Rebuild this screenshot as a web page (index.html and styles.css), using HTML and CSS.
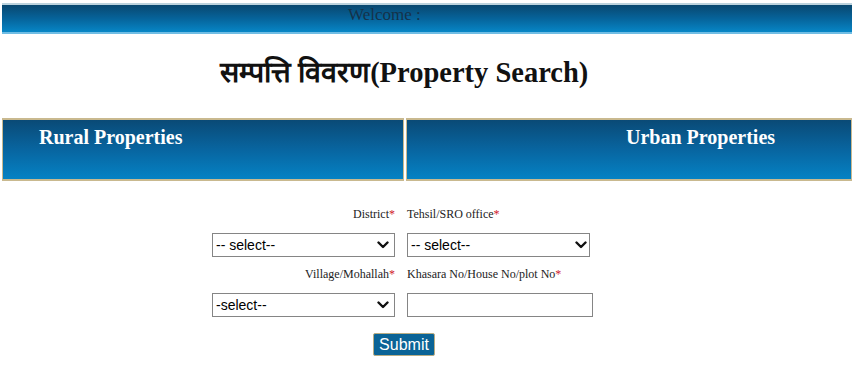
FILE: index.html
```html
<!DOCTYPE html>
<html>
<head>
<meta charset="utf-8">
<link rel="stylesheet" href="styles.css">
</head>
<body>
<div class="page">
  <div class="topbar"><span class="welcome">Welcome :</span></div>
  <h1 class="title">सम्पत्ति विवरण(Property Search)</h1>
  <div class="tabs">
    <div class="tab tab-rural">Rural Properties</div>
    <div class="tab tab-urban">Urban Properties</div>
  </div>
  <form class="form">
    <label class="lbl lbl-left">District<span class="req">*</span></label>
    <label class="lbl lbl-right">Tehsil/SRO office<span class="req">*</span></label>
    <div class="sel-wrap">
      <select class="ctl"><option>-- select--</option></select>
      <svg class="chev" viewBox="0 0 12 8" width="12" height="8"><path d="M1.5 1.5 L6 6 L10.5 1.5" fill="none" stroke="#111" stroke-width="2.4" stroke-linecap="round" stroke-linejoin="round"/></svg>
    </div>
    <div class="sel-wrap">
      <select class="ctl"><option>-- select--</option></select>
      <svg class="chev" viewBox="0 0 12 8" width="12" height="8"><path d="M1.5 1.5 L6 6 L10.5 1.5" fill="none" stroke="#111" stroke-width="2.4" stroke-linecap="round" stroke-linejoin="round"/></svg>
    </div>
    <label class="lbl lbl-left">Village/Mohallah<span class="req">*</span></label>
    <label class="lbl lbl-right">Khasara No/House No/plot No<span class="req">*</span></label>
    <div class="sel-wrap">
      <select class="ctl"><option>-select--</option></select>
      <svg class="chev" viewBox="0 0 12 8" width="12" height="8"><path d="M1.5 1.5 L6 6 L10.5 1.5" fill="none" stroke="#111" stroke-width="2.4" stroke-linecap="round" stroke-linejoin="round"/></svg>
    </div>
    <div class="inp-wrap"><input class="ctl ctl-input" type="text"></div>
    <div class="actions"><button type="button" class="submit">Submit</button></div>
  </form>
</div>
</body>
</html>
```
FILE: styles.css
```css
html, body {
  margin: 0;
  padding: 0;
  background: #ffffff;
}
.page {
  margin: 3px 3px 0 2px;
  font-family: "Liberation Serif", "Times New Roman", serif;
}
.topbar {
  height: 27px;
  border-top: 2px solid #bcd3de;
  border-bottom: 2px solid #70bde4;
  background: linear-gradient(to bottom, #09476f 0%, #06639a 50%, #0786c6 100%);
  padding-left: 346px;
  box-sizing: content-box;
}
.welcome {
  display: block;
  font-size: 17px;
  line-height: 20px;
  color: #15324a;
}
.title {
  margin: 22px 0 0 218px;
  font-size: 28.5px;
  line-height: 34px;
  font-weight: bold;
  color: #111;
  height: 62px;
}
.tabs {
  display: flex;
  gap: 2px;
  height: 63px;
}
.tab {
  box-sizing: border-box;
  height: 63px;
  border: 1px solid #c9b98f;
  border-width: 2px 1px 2px 1px;
  background: linear-gradient(to bottom, #0a4a76 0%, #0865a0 50%, #0582c4 100%);
  color: #ffffff;
  font-weight: bold;
  font-size: 20px;
  line-height: 22px;
  padding-top: 6px;
}
.tab-rural {
  width: 402px;
  padding-left: 36px;
}
.tab-urban {
  flex: 1;
  padding-left: 219px;
}
.form {
  display: grid;
  grid-template-columns: 183px 186px;
  column-gap: 12px;
  margin-left: 210px;
  padding-top: 26px;
  width: 381px;
}
.lbl {
  font-size: 12px;
  line-height: 14px;
  color: #222;
  height: 14px;
}
.lbl-left { text-align: right; }
.lbl-right { text-align: left; }
.req { color: #d0202a; }
.sel-wrap, .inp-wrap {
  position: relative;
  margin-top: 12px;
  margin-bottom: 10px;
  height: 24px;
}
.ctl {
  display: block;
  margin: 0;
  height: 24px;
  box-sizing: border-box;
  font-family: "Liberation Sans", Arial, sans-serif;
  font-size: 14px;
  color: #000;
  border: 1px solid #858585;
  border-radius: 0;
  background: #fff;
  padding: 0 0 0 3px;
}
select.ctl {
  width: 183px;
  -webkit-appearance: none;
  appearance: none;
}
.chev {
  position: absolute;
  right: 6px;
  top: 8px;
  pointer-events: none;
}
.ctl-input { width: 186px; height: 24px; }
.actions {
  grid-column: 1 / span 2;
  display: flex;
  justify-content: center;
  padding-left: 3px;
  margin-top: 6px;
}
.submit {
  width: 62px;
  height: 23px;
  padding: 0;
  border: 1px solid #b9ad84;
  border-radius: 2px;
  background: #0a6396;
  color: #ffffff;
  font-family: "Liberation Sans", Arial, sans-serif;
  font-size: 16px;
  line-height: 20px;
}
```
